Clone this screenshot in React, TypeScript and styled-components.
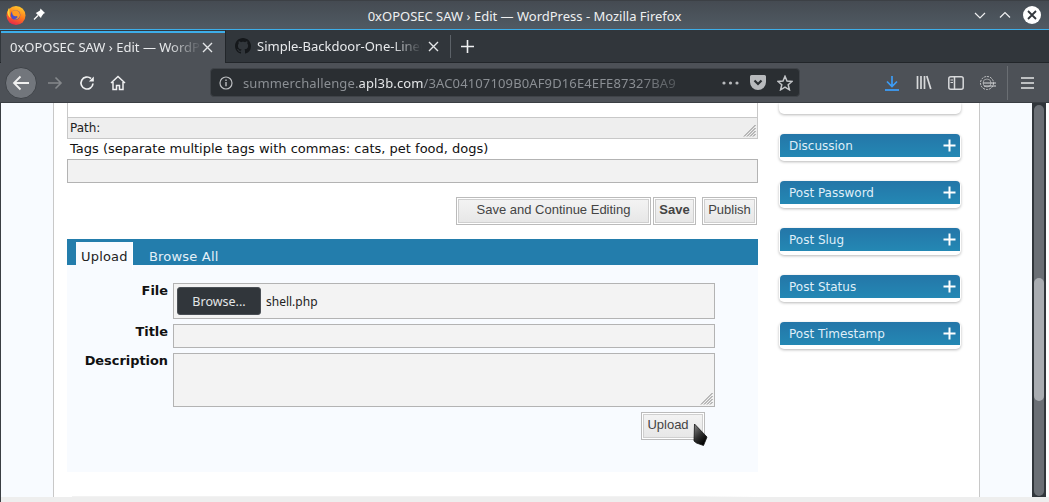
import React from "react";
import styled, { createGlobalStyle } from "styled-components";

const Global = createGlobalStyle`
  html, body { margin: 0; padding: 0; width: 1049px; height: 502px; overflow: hidden; background: #fff; }
  * { box-sizing: border-box; }
`;
const Win = styled.div`
  width: 1049px; height: 502px; display: flex; flex-direction: column; overflow: hidden;
  font-family: "Noto Sans", sans-serif; color: #eff0f1;
`;
const TitleBar = styled.div`
  height: 30px; flex: none; display: flex; align-items: center; padding: 0 8px 1px 6px; position: relative;
  background: linear-gradient(#454b52, #505a63); border-top: 1px solid #3c4045; border-bottom: 1px solid #3daee9;
`;
const TitleText = styled.div`
  position: absolute; left: 0; right: 0; text-align: center; font-size: 13px; top: 6px; color: #eff0f1;
`;
const TitleLeft = styled.div`display: flex; align-items: center; gap: 7px; flex: 1;`;
const TitleRight = styled.div`display: flex; align-items: center; gap: 11px;`;
const TabBar = styled.div`
  height: 33px; flex: none; display: flex; align-items: stretch; background: #31363b; border-bottom: 1px solid #22262a;
`;
const ActiveTab = styled.div`
  width: 224px; margin: 1px 0 -1px 1px; background: #4d5157; border-top: 2px solid #3daee9; display: flex; align-items: center;
  padding: 0 12px 2px 9px; font-size: 13px; color: #e4e6e8;
`;
const TabTitle = styled.span`
  flex: 1; overflow: hidden; white-space: nowrap; font-size: 13px; color: #e8eaec;
  -webkit-mask-image: linear-gradient(90deg, #000 82%, transparent 100%);
  mask-image: linear-gradient(90deg, #000 82%, transparent 100%);
`;
const InactiveTab = styled.div`
  width: 225px; display: flex; align-items: center; padding: 0 11px 0 9px; gap: 6px; color: #e4e6e8; border-left: 1px solid #22262a;
`;
const TabDivider = styled.div`width: 1px; height: 23px; background: #5c6268; align-self: center;`;
const NewTab = styled.div`width: 33px; display: flex; align-items: center; justify-content: center;`;
const NavBar = styled.div`
  height: 40px; flex: none; display: flex; align-items: center; background: #4d5157; padding: 0 5px; border-bottom: 1px solid #3a3e43;
`;
const BackButton = styled.div`
  width: 32px; height: 32px; border-radius: 50%; background: #72767c; border: 1px solid #3f4348;
  display: flex; align-items: center; justify-content: center;
`;
const NavIcon = styled.div<{ $w: number }>`
  width: ${(p) => p.$w}px; height: 32px; display: flex; align-items: center; justify-content: center;
`;
const UrlBar = styled.div`
  width: 590px; height: 29px; margin-left: 75px; background: #2a2e32; border: 1px solid #3f4348; border-radius: 4px;
  display: flex; align-items: center; padding: 0 6px 0 8px; font-size: 13px; color: #8b8f94;
`;
const UrlText = styled.div`
  width: 445px; margin-left: 10px; padding-top: 1px; overflow: hidden; white-space: nowrap; font-size: 13px; letter-spacing: 0.01em;
  -webkit-mask-image: linear-gradient(90deg, #000 88%, rgba(0,0,0,0.25) 100%);
  mask-image: linear-gradient(90deg, #000 88%, rgba(0,0,0,0.25) 100%);
`;
const UrlHost = styled.span`color: #e4e6e8;`;
const UrlActions = styled.div`display: flex; align-items: center; gap: 11px; margin-left: 34px;`;
const ToolIcons = styled.div`display: flex; align-items: center; margin-left: 76px;`;
const ToolSlot = styled.div`width: 32px; display: flex; justify-content: center; align-items: center;`;
const ToolDivider = styled.div`width: 1px; height: 34px; background: #6a6e73; margin: 0 13px 0 3px;`;

const Content = styled.div`height: 394px; flex: none; display: flex; background: #fff;`;
const Page = styled.div`
  width: 1032px; background: #f8fbff; border-left: 1px solid #3a3e43; padding-left: 52px; padding-right: 52px; overflow: hidden; height: 394px;
`;
const Wrap = styled.div`
  width: 927px; height: 100%; background: #fff; border-left: 1px solid #c8c8c8; border-right: 1px solid #c8c8c8;
  display: flex; padding-left: 13px; position: relative;
`;
const Main = styled.div`width: 691px; flex: none;`;
const EditorStub = styled.div`height: 14px; border-left: 1px solid #c8c8c8; border-right: 1px solid #c8c8c8;`;
const PathBar = styled.div`
  height: 22px; background: #eeeeee; border: 1px solid #c8c8c8; position: relative;
  font: 12px "DejaVu Sans", sans-serif; color: #222; padding: 3px 2px;
`;
const Grip = styled.svg`position: absolute; right: 1px; bottom: 1px;`;
const TagsLabel = styled.div`
  font: 13px/20px "DejaVu Sans", sans-serif; color: #111; padding-left: 3px;
`;
const TagsInput = styled.div`height: 24px; background: #f2f2f2; border: 1px solid #b3b3b3;`;
const Actions = styled.div`display: flex; justify-content: flex-end; padding-right: 1px; margin-top: 14px;`;
const ClassicButton = styled.div<{ $bold?: boolean }>`
  height: 28px; border: 1px solid #bbb; box-shadow: inset 0 0 0 1px #fff, inset 0 0 0 2px #cfcfcf; background: linear-gradient(#f4f4f4, #e6e6e6);
  display: flex; align-items: center; justify-content: center; padding: 0 4px 4px;
  font: ${(p) => (p.$bold ? "bold " : "")}13px "Liberation Sans", Arial, sans-serif; color: #444;
`;
const WideButton = styled(ClassicButton)`width: 195px; margin-right: 2px;`;
const SaveButton = styled(ClassicButton)`width: 43px; margin-right: 6px;`;
const PublishButton = styled(ClassicButton)`width: 55px;`;
const Uploader = styled.div`margin-top: 14px;`;
const UploadTabs = styled.div`
  height: 26px; background: #237dac; display: flex; padding: 3px 0 0 9px; align-items: flex-start;
`;
const UploadTab = styled.div<{ $active?: boolean }>`
  height: ${(p) => (p.$active ? "28px" : "23px")};
  width: ${(p) => (p.$active ? "57px" : "auto")};
  background: ${(p) => (p.$active ? "#f8fbff" : "transparent")};
  border-right: ${(p) => (p.$active ? "1px solid #fff" : "none")};
  color: ${(p) => (p.$active ? "#222" : "#e4f0f8")};
  font: 13px/22px "DejaVu Sans", sans-serif; padding: 4px 0 0 5px; letter-spacing: 0.015em;
  margin-right: ${(p) => (p.$active ? "11px" : "0")};
  position: relative; z-index: 1;
`;
const UploadBody = styled.div`height: 207px; background: #f8fbff; padding: 18px 43px 0 0;`;
const FieldRow = styled.div`display: flex; margin-bottom: 5px;`;
const FieldLabel = styled.div`
  width: 101px; text-align: right; font: bold 12.9px/15px "DejaVu Sans", sans-serif; color: #111; margin-right: 5px;
`;
const FileBox = styled.div`
  flex: 1; height: 36px; background: #f3f3f3; border: 1px solid #b3b3b3; display: flex; align-items: center; padding-left: 3px;
`;
const BrowseButton = styled.div`
  width: 84px; height: 28px; background: #31363b; border: 1px solid #4a4f55; border-radius: 3px; color: #e4e6e8; font: 12.5px "Noto Sans", sans-serif;
  display: flex; align-items: center; justify-content: center; margin-right: 5px;
`;
const FileName = styled.span`font: 12px "Noto Sans", sans-serif; color: #222;`;
const TitleInput = styled.div`flex: 1; height: 24px; background: #f3f3f3; border: 1px solid #b3b3b3;`;
const DescInput = styled.div`flex: 1; height: 54px; background: #f3f3f3; border: 1px solid #b3b3b3; position: relative;`;
const UploadAction = styled.div`display: flex; justify-content: flex-end; padding-right: 10px;`;
const UploadButton = styled(ClassicButton)`width: 64px; padding: 0 10px 4px 0;`;
const PageRule = styled.div`height: 1px; margin: 24px 0 0 5px; background: linear-gradient(90deg, #f2f2f2 90%, #fff);`;
const Cursor = styled.svg`position: absolute; left: 639px; top: 320px; z-index: 5;`;
const Side = styled.div`margin-left: 21px; width: 182px; display: flex; flex-direction: column;`;
const Box = styled.div`
  width: 182px; height: 27px; margin-bottom: 20px; background: #fff; border-radius: 5px; box-shadow: 0 1px 3px rgba(0,0,0,0.28); padding: 0 1px;
`;
const BoxHead = styled.div`
  height: 23px; background: linear-gradient(#2476a8, #2488b4); border-radius: 4px 4px 0 0; display: flex; align-items: center; justify-content: space-between;
  padding: 0 4px 0 9px; color: #dfeef8; font: 12px "DejaVu Sans", sans-serif;
`;
const TopStub = styled.div`
  width: 182px; height: 11px; margin-bottom: 20px; background: #fff; border-radius: 0 0 5px 5px; box-shadow: 0 1px 3px rgba(0,0,0,0.28);
`;
const Scroll = styled.div`width: 14px; height: 394px; flex: none; background: #31363b; padding: 2px 2px 0;`;
const Track = styled.div`height: 391px; width: 10px; background: #6b6f75; border-radius: 5px; position: relative;`;
const Thumb = styled.div`position: absolute; left: 0; top: 173px; width: 10px; height: 123px; background: #a9acb1; border-radius: 5px;`;
const BottomBand = styled.div`flex: 1; background: #eeeeee; border-left: 1px solid #3a3e43;`;

const plus = (
  <svg width="13" height="13" viewBox="0 0 13 13"><path d="M6.5 0.5v12M0.5 6.5h12" stroke="#fff" strokeWidth="2" /></svg>
);
const grip = (
  <Grip width="13" height="13" viewBox="0 0 13 13"><path d="M12.5 1 1 12.5M12.5 4 4 12.5M12.5 7 7 12.5M12.500 10 10 12.500" stroke="#808080" strokeWidth="1" /></Grip>
);

export default function App() {
  return (
    <Win>
      <Global />
      <TitleBar>
        <TitleLeft>
          <svg width="20" height="20" viewBox="0 0 20 20">
            <defs>
              <linearGradient id="fx" x1="0.7" y1="0" x2="0.3" y2="1"><stop offset="0" stopColor="#ffcb2e" /><stop offset="0.5" stopColor="#ff7a1a" /><stop offset="1" stopColor="#e5224d" /></linearGradient>
            </defs>
            <circle cx="10" cy="10.5" r="9.5" fill="url(#fx)" />
            <circle cx="9.5" cy="10" r="4.8" fill="#4a4fc8" />
            <path d="M6 6.5c3-2.500 8-1 8 3.500 0 3-3 5-6 4 3 0 4-2 3-3-2 1-5 0-5-4.500z" fill="#ff9a22" />
            <path d="M3 3c1 3 0 7 2 10.500C1.500 11 0.500 7 3 3z" fill="#ffd53a" />
          </svg>
          <svg width="13" height="13" viewBox="0 0 13 13"><path d="M7.5 0.500 12 5 10.500 5.700 8.500 8.500 8 10 2.800 4.900 4.200 4.300 7 2.500z" fill="#fff" /><path d="M5 7.500 1 11.500" stroke="#fff" strokeWidth="1.3" /></svg>
        </TitleLeft>
        <TitleText>0xOPOSEC SAW › Edit — WordPress - Mozilla Firefox</TitleText>
        <TitleRight>
          <svg width="14" height="14" viewBox="0 0 14 14"><path d="M2 5l5 5 5-5" stroke="#eff0f1" strokeWidth="1.2" fill="none" /></svg>
          <svg width="14" height="14" viewBox="0 0 14 14"><path d="M2 9.500l5-5 5 5" stroke="#eff0f1" strokeWidth="1.2" fill="none" /></svg>
          <svg width="18" height="18" viewBox="0 0 18 18"><circle cx="9" cy="9" r="9" fill="#fff" /><path d="M5 5l8 8M13 5l-8 8" stroke="#31363b" strokeWidth="1.8" /></svg>
        </TitleRight>
      </TitleBar>
      <TabBar>
        <ActiveTab>
          <TabTitle>0xOPOSEC SAW › Edit — WordPress</TabTitle>
          <svg width="11" height="11" viewBox="0 0 11 11"><path d="M1 1l9 9M10 1l-9 9" stroke="#e4e6e8" strokeWidth="1.4" /></svg>
        </ActiveTab>
        <InactiveTab>
          <svg width="16" height="16" viewBox="0 0 16 16"><path fill="#15181b" d="M8 0C3.58 0 0 3.58 0 8c0 3.54 2.29 6.53 5.47 7.59.4.07.55-.17.55-.38 0-.19-.01-.82-.01-1.49-2.01.37-2.53-.49-2.69-.94-.09-.23-.48-.94-.82-1.13-.28-.15-.68-.52-.01-.53.63-.01 1.08.58 1.23.82.72 1.21 1.87.87 2.33.66.07-.52.28-.87.51-1.07-1.78-.2-3.64-.89-3.64-3.95 0-.87.31-1.59.82-2.15-.08-.2-.36-1.02.08-2.12 0 0 .67-.21 2.2.82.64-.18 1.32-.27 2-.27.68 0 1.36.09 2 .27 1.53-1.04 2.2-.82 2.2-.82.44 1.1.16 1.92.08 2.12.51.56.82 1.27.82 2.15 0 3.07-1.87 3.75-3.65 3.95.29.25.54.73.54 1.48 0 1.07-.01 1.93-.01 2.2 0 .21.15.46.55.38A8.013 8.013 0 0 0 16 8c0-4.420-3.580-8-8-8z" /></svg>
          <TabTitle>Simple-Backdoor-One-Liner.php</TabTitle>
          <svg width="11" height="11" viewBox="0 0 11 11"><path d="M1 1l9 9M10 1l-9 9" stroke="#e4e6e8" strokeWidth="1.4" /></svg>
        </InactiveTab>
        <TabDivider />
        <NewTab>
          <svg width="15" height="15" viewBox="0 0 15 15"><path d="M7.500 1v13M1 7.500h13" stroke="#eff0f1" strokeWidth="1.6" /></svg>
        </NewTab>
      </TabBar>
      <NavBar>
        <BackButton>
          <svg width="18" height="16" viewBox="0 0 18 16"><path d="M17 8H2M8.500 1.500 2 8l6.500 6.500" stroke="#f0f0f0" strokeWidth="1.8" fill="none" /></svg>
        </BackButton>
        <NavIcon $w={36}>
          <svg width="16" height="14" viewBox="0 0 16 14"><path d="M1 7h13M8.500 1.500 14 7l-5.500 5.500" stroke="#85888c" strokeWidth="1.6" fill="none" /></svg>
        </NavIcon>
        <NavIcon $w={28}>
          <svg width="16" height="16" viewBox="0 0 16 16"><path d="M14 8.500A6 6 0 1 1 12 3.500" stroke="#eff0f1" strokeWidth="1.7" fill="none" /><path d="M14.800 1.500v5h-5z" fill="#eff0f1" /></svg>
        </NavIcon>
        <NavIcon $w={34}>
          <svg width="16" height="16" viewBox="0 0 16 16"><path d="M1 8 8 1.500 15 8M3 7v7.500h3.500v-4h3v4H13V7" stroke="#eff0f1" strokeWidth="1.5" fill="none" /></svg>
        </NavIcon>
        <UrlBar>
          <svg width="14" height="14" viewBox="0 0 14 14"><circle cx="7" cy="7" r="6" stroke="#bcbec1" strokeWidth="1.2" fill="none" /><path d="M7 6v4.200M7 3.500v1.400" stroke="#bcbec1" strokeWidth="1.4" /></svg>
          <UrlText>summerchallenge.<UrlHost>apl3b.com</UrlHost>/3AC04107109B0AF9D16E4EFE87327BA9</UrlText>
          <UrlActions>
            <svg width="17" height="4" viewBox="0 0 17 4"><circle cx="2" cy="2" r="1.6" fill="#b8babd" /><circle cx="8.500" cy="2" r="1.6" fill="#b8babd" /><circle cx="15" cy="2" r="1.6" fill="#b8babd" /></svg>
            <svg width="16" height="15" viewBox="0 0 16 15"><path d="M1.500 0h13A1.500 1.500 0 0 1 16 1.500V7A8 8 0 0 1 0 7V1.500A1.500 1.500 0 0 1 1.500 0z" fill="#b8babd" /><path d="M4.500 5.500 8 9l3.500-3.500" stroke="#2a2e32" strokeWidth="2.2" fill="none" /></svg>
            <svg width="16" height="16" viewBox="0 0 16 16"><path d="M8 1.300 10 6l5 .5-3.800 3.300 1.200 5L8 12.200l-4.400 2.600 1.200-5L1 6.500 6 6z" stroke="#c4c6c9" strokeWidth="1.5" fill="none" /></svg>
          </UrlActions>
        </UrlBar>
        <ToolIcons>
          <ToolSlot>
            <svg width="16" height="16" viewBox="0 0 16 16"><path d="M8 1v10M3 6.500l5 5 5-5" stroke="#3d9cf5" strokeWidth="1.7" fill="none" /><path d="M1 15h14" stroke="#3d9cf5" strokeWidth="1.8" /></svg>
          </ToolSlot>
          <ToolSlot>
            <svg width="16" height="15" viewBox="0 0 16 15"><path d="M1.500 1v13M5 1v13M8.500 1v13M10.800 1l4 13" stroke="#d8d9db" strokeWidth="1.700" fill="none" /></svg>
          </ToolSlot>
          <ToolSlot>
            <svg width="16" height="14" viewBox="0 0 16 14"><rect x="0.800" y="0.800" width="14.400" height="12.400" rx="2" stroke="#d8d9db" strokeWidth="1.500" fill="none" /><path d="M6.500 1v12" stroke="#d8d9db" strokeWidth="1.500" /><path d="M2.500 4h2.500M2.500 6.500h2.500" stroke="#d8d9db" strokeWidth="1" /></svg>
          </ToolSlot>
          <ToolSlot>
            <svg width="18" height="16" viewBox="0 0 18 16"><circle cx="8" cy="8" r="6.500" stroke="#c8c9cb" strokeWidth="1" strokeDasharray="2 1" fill="none" /><circle cx="8" cy="8" r="4" stroke="#9a9c9f" strokeWidth="1" fill="none" /><path d="M4 8h13M5 11h12" stroke="#d8d9db" strokeWidth="1" /></svg>
          </ToolSlot>
        </ToolIcons>
        <ToolDivider />
        <svg width="13" height="12" viewBox="0 0 13 12"><path d="M0 1h13M0 6h13M0 11h13" stroke="#e4e5e6" strokeWidth="1.700" /></svg>
      </NavBar>
      <Content>
        <Page>
          <Wrap>
            <Main>
              <EditorStub />
              <PathBar>Path:{grip}</PathBar>
              <TagsLabel>Tags (separate multiple tags with commas: cats, pet food, dogs)</TagsLabel>
              <TagsInput />
              <Actions>
                <WideButton>Save and Continue Editing</WideButton>
                <SaveButton $bold>Save</SaveButton>
                <PublishButton>Publish</PublishButton>
              </Actions>
              <Uploader>
                <UploadTabs>
                  <UploadTab $active>Upload</UploadTab>
                  <UploadTab>Browse All</UploadTab>
                </UploadTabs>
                <UploadBody>
                  <FieldRow>
                    <FieldLabel>File</FieldLabel>
                    <FileBox><BrowseButton>Browse...</BrowseButton><FileName>shell.php</FileName></FileBox>
                  </FieldRow>
                  <FieldRow>
                    <FieldLabel>Title</FieldLabel>
                    <TitleInput />
                  </FieldRow>
                  <FieldRow>
                    <FieldLabel>Description</FieldLabel>
                    <DescInput>{grip}</DescInput>
                  </FieldRow>
                  <UploadAction><UploadButton>Upload</UploadButton></UploadAction>
                </UploadBody>
              </Uploader>
              <PageRule />
            </Main>
            <Side>
              <TopStub />
              {["Discussion", "Post Password", "Post Slug", "Post Status", "Post Timestamp"].map((t) => (
                <Box key={t}><BoxHead>{t}{plus}</BoxHead></Box>
              ))}
            </Side>
            <Cursor width="16" height="24" viewBox="0 0 16 24">
              <defs><linearGradient id="cur" x1="0" y1="0" x2="0.6" y2="1"><stop offset="0" stopColor="#8a8a8a" /><stop offset="0.55" stopColor="#333" /><stop offset="1" stopColor="#000" /></linearGradient></defs>
              <path d="M1.500 1 14 14 10.500 22.500 3.500 20 1 18z" fill="url(#cur)" stroke="#111" strokeWidth="0.8" />
            </Cursor>
          </Wrap>
        </Page>
        <Scroll><Track><Thumb /></Track></Scroll>
      </Content>
      <BottomBand />
    </Win>
  );
}
